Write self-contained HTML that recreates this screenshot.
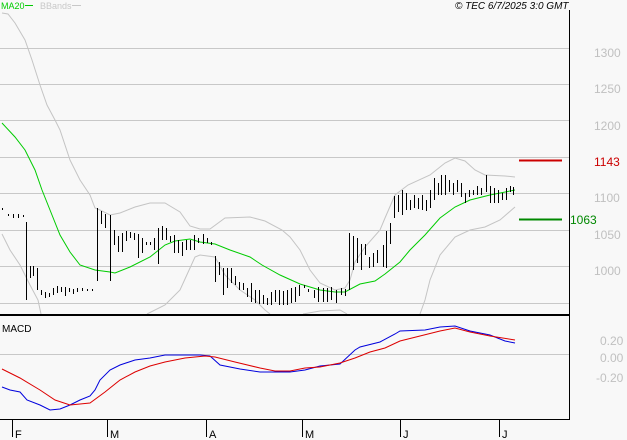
<!DOCTYPE html>
<html><head><meta charset="utf-8"><style>
html,body{margin:0;padding:0;background:#f8f8f8;}
svg{display:block;font-family:"Liberation Sans",sans-serif;}
</style></head><body>
<svg width="627" height="440" viewBox="0 0 627 440" xmlns="http://www.w3.org/2000/svg">
<rect width="627" height="440" fill="#f8f8f8"/>
<g stroke="#c8c8c8" stroke-width="1">
<line x1="0" y1="48.5" x2="569" y2="48.5"/><line x1="0" y1="84.5" x2="569" y2="84.5"/>
<line x1="0" y1="120.5" x2="569" y2="120.5"/><line x1="0" y1="157.5" x2="569" y2="157.5"/>
<line x1="0" y1="193.5" x2="569" y2="193.5"/><line x1="0" y1="230.5" x2="569" y2="230.5"/>
<line x1="0" y1="266.5" x2="569" y2="266.5"/><line x1="0" y1="303.5" x2="569" y2="303.5"/>
<line x1="0" y1="354.5" x2="569" y2="354.5"/>
</g>
<g fill="none" stroke="#c4c4c4" stroke-width="1">
<polyline points="2,13 8,14 15,23 25,40 32,60 40,85 47,105 55,120 60,130 70,160 80,180 90,195 95,208 100,210 110,215 120,213 135,207 150,203 165,203 180,212 190,226 200,229 210,229 225,218 250,217 265,221 282,230 290,237 300,250 310,270 320,283 335,290 345,288 350,280 355,262 365,247 380,230 385,218 395,195 408,185 430,175 445,163 455,158 465,161 475,170 485,175 505,176 515,177"/>
<polyline points="2,234 10,250 20,265 30,285 38,300 41,314"/>
<polyline points="147,314 165,305 180,290 190,268 195,257 200,255 215,257 225,275 240,290 255,300 265,310 270,314"/>
<polyline points="303,314 320,311 340,310 347,314"/>
<polyline points="420,314 425,300 430,280 440,255 455,237 470,230 485,227 500,220 515,207"/>
</g>
<polyline fill="none" stroke="#00cc00" stroke-width="1" points="2,123 15,137 25,150 35,170 42,190 50,210 60,235 70,252 80,265 95,270 110,272 115,273 130,267 150,257 165,245 175,241 190,239 200,242 215,244 230,250 250,257 262,265 280,275 300,284 320,290 335,292 345,292 360,284 375,281 385,274 400,262 410,250 425,235 440,218 455,207 470,200 490,195 515,190"/>
<path fill="none" stroke="#000" stroke-width="1" d="M2.5 208V210M8.5 214V216M13.5 214V218M18.5 214V218M23.5 215V217M26.5 222V300M30.5 266V278M33.5 266V276M37.5 268V290M41.5 290V295M45.5 292V298M49.5 293V297M53.5 288V295M57.5 286V293M61.5 287V292M65.5 287V296M69.5 288V292M73.5 289V294M77.5 288V292M82.5 288V291M87.5 289V291M92.5 289V291M97.5 208V281M101.5 211V224M105.5 214V228M110.5 215V281M114.5 230V245M118.5 236V252M122.5 233V252M126.5 231V241M130.5 232V238M134.5 233V240M138.5 234V258M142.5 238V253M146.5 242V245M150.5 242V245M154.5 238V250M158.5 228V264M162.5 226V240M166.5 228V240M170.5 236V242M174.5 235V253M178.5 240V253M182.5 242V256M186.5 240V250M190.5 240V250M194.5 235V250M198.5 238V243M203.5 234V244M207.5 238V243M211.5 242V245M215.5 256V282M219.5 262V275M223.5 268V295M227.5 268V288M231.5 268V283M235.5 276V285M239.5 282V290M243.5 283V290M247.5 288V297M251.5 283V302M255.5 290V303M259.5 290V304M263.5 295V304M267.5 298V305M271.5 292V305M275.5 290V302M279.5 290V305M283.5 291V305M287.5 290V305M291.5 288V303M295.5 287V302M299.5 285V296M304.5 285V288M308.5 289V292M314.5 290V298M318.5 287V302M323.5 288V302M327.5 288V302M331.5 287V300M336.5 290V303M341.5 288V295M345.5 289V296M349.5 233V290M353.5 236V270M357.5 238V263M361.5 244V270M365.5 244V255M369.5 257V268M373.5 253V267M377.5 250V263M383.5 245V267M386.5 231V268M390.5 223V244M394.5 196V218M398.5 195V212M402.5 190V215M406.5 193V210M410.5 200V210M414.5 195V208M418.5 198V209M422.5 195V210M426.5 200V211M430.5 190V208M434.5 178V200M438.5 183V195M441.5 175V195M445.5 175V195M449.5 180V192M453.5 183V195M457.5 180V192M461.5 183V197M465.5 193V203M469.5 190V197M473.5 190V195M477.5 186V195M481.5 188V195M486.5 175V192M490.5 186V203M494.5 188V203M498.5 190V203M502.5 193V200M506.5 188V200M510.5 186V192M513.5 187V195"/>
<rect x="0" y="314" width="570" height="2" fill="#000"/>
<line x1="569.5" y1="10" x2="569.5" y2="420" stroke="#000"/>
<line x1="0" y1="419.5" x2="570" y2="419.5" stroke="#000"/>
<g stroke="#000"><line x1="12.5" y1="419" x2="12.5" y2="437"/><line x1="107.5" y1="419" x2="107.5" y2="437"/><line x1="206.5" y1="419" x2="206.5" y2="437"/><line x1="302.5" y1="419" x2="302.5" y2="437"/><line x1="400.5" y1="419" x2="400.5" y2="437"/><line x1="499.5" y1="419" x2="499.5" y2="437"/></g>
<g font-size="11" fill="#000"><text x="15" y="438">F</text><text x="110" y="438">M</text><text x="209" y="438">A</text><text x="305" y="438">M</text><text x="403" y="438">J</text><text x="502" y="438">J</text></g>
<text x="2" y="332" font-size="10" fill="#000">MACD</text>
<polyline fill="none" stroke="#0000dd" stroke-width="1" points="2,387 10,390 20,392 27,400 40,405 50,410 60,409 70,405 80,400 90,396 95,390 100,380 110,370 120,365 135,360 150,358 165,355 180,355 200,355 210,356 220,365 240,369 260,372 275,372 290,372 305,370 320,366 340,364 355,350 360,347 380,342 395,334 400,331 425,330 440,327 455,326 470,331 490,335 505,341 515,343"/>
<polyline fill="none" stroke="#dd0000" stroke-width="1" points="2,369 20,378 40,390 55,400 70,405 90,403 105,392 120,380 135,372 150,366 165,362 185,358 205,356 215,357 235,362 260,368 275,371 290,371 305,368 320,367 340,363 355,358 370,352 385,348 400,341 420,336 440,331 455,328 470,332 490,336 515,340"/>
<line x1="519" y1="160.5" x2="562" y2="160.5" stroke="#cc0000" stroke-width="2"/>
<line x1="519" y1="219.5" x2="562" y2="219.5" stroke="#008800" stroke-width="2"/>
<g font-size="12" fill="#c0c0c0">
<text x="594" y="57">1300</text><text x="594" y="93">1250</text><text x="594" y="130">1200</text>
<text x="594" y="202">1100</text><text x="594" y="239">1050</text><text x="594" y="275">1000</text>
<text x="600" y="345">0.20</text><text x="600" y="362">0.00</text><text x="596" y="382">-0.20</text>
</g>
<text x="594" y="166" font-size="12" fill="#cc0000">1143</text>
<text x="570" y="224" font-size="12" fill="#008800">1063</text>
<text x="1" y="9" font-size="9" fill="#00cc00">MA20</text>
<line x1="25" y1="5.5" x2="33" y2="5.5" stroke="#00cc00"/>
<text x="40" y="9" font-size="9" fill="#c8c8c8">BBands</text>
<line x1="72" y1="5.5" x2="81" y2="5.5" stroke="#c8c8c8"/>
<text x="455" y="9" font-size="10" font-style="italic" fill="#000">© TEC 6/7/2025 3:0 GMT</text>
</svg>
</body></html>
